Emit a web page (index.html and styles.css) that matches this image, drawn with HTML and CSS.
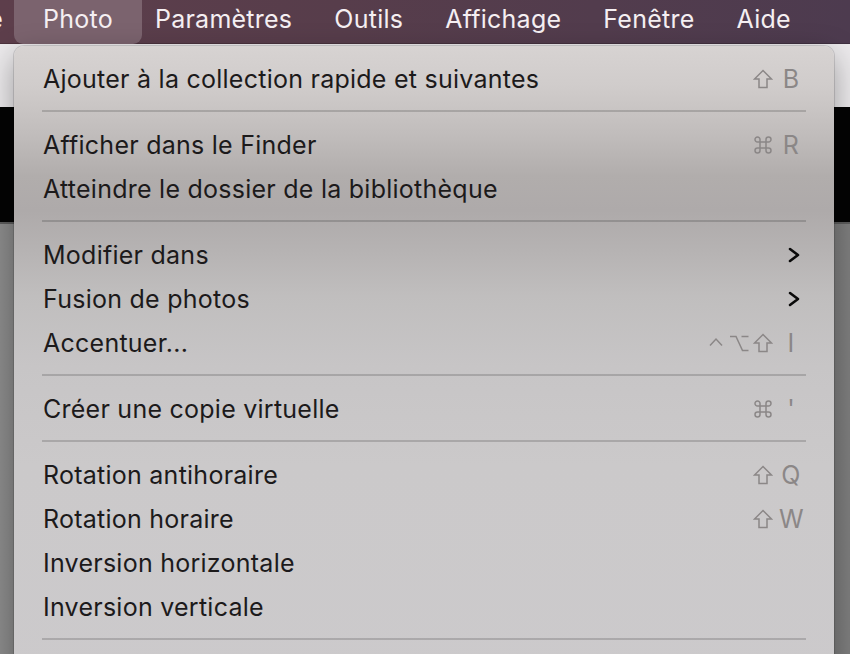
FILE: index.html
```html
<!DOCTYPE html>
<html lang="fr">
<head>
<meta charset="utf-8">
<title>Menu Photo</title>
<link rel="stylesheet" href="styles.css">
</head>
<body>
<div class="screen">
  <header class="menubar">
    <div class="prev"><span>Bibliothèque</span></div>
    <span class="mi active">Photo</span>
    <span class="mi">Paramètres</span>
    <span class="mi">Outils</span>
    <span class="mi">Affichage</span>
    <span class="mi">Fenêtre</span>
    <span class="mi">Aide</span>
  </header>
  <main class="desk">
    <div class="band light"></div>
    <div class="band dark"></div>
    <div class="band rule"></div>
    <div class="band gray"></div>
  </main>

  <nav class="menu">
    <div class="row"><span class="label">Ajouter à la collection rapide et suivantes</span>
      <span class="sc"><span class="mods"><svg class="ic shift" viewBox="0 0 20 20"><path d="M10 1.5 L18.5 10 H14 V18.5 H6 V10 H1.5 Z"/></svg></span><span class="key">B</span></span></div>
    <div class="sep"></div>
    <div class="row"><span class="label">Afficher dans le Finder</span>
      <span class="sc"><span class="mods"><svg class="ic cmd" viewBox="0 0 20 20"><path d="M7 7 V4.5 A2.5 2.5 0 1 0 4.5 7 H15.5 A2.5 2.5 0 1 0 13 4.5 V15.5 A2.5 2.5 0 1 0 15.5 13 H4.5 A2.5 2.5 0 1 0 7 15.5 Z"/></svg></span><span class="key">R</span></span></div>
    <div class="row"><span class="label">Atteindre le dossier de la bibliothèque</span></div>
    <div class="sep"></div>
    <div class="row"><span class="label">Modifier dans</span>
      <span class="sc"><span class="key sub"><svg class="chev" viewBox="0 0 12 16"><path d="M2 2 L10 8 L2 14"/></svg></span></span></div>
    <div class="row"><span class="label">Fusion de photos</span>
      <span class="sc"><span class="key sub"><svg class="chev" viewBox="0 0 12 16"><path d="M2 2 L10 8 L2 14"/></svg></span></span></div>
    <div class="row"><span class="label">Accentuer...</span>
      <span class="sc"><span class="mods">
        <svg class="ic ctrl" viewBox="0 0 14 20"><path d="M1 12.5 L7 6 L13 12.5"/></svg>
        <svg class="ic opt" viewBox="0 0 20 20"><path d="M1 3.5 H7 L13.5 17.5 H19.5 M12.5 3.5 H19.5"/></svg>
        <svg class="ic shift" viewBox="0 0 20 20"><path d="M10 1.5 L18.5 10 H14 V18.5 H6 V10 H1.5 Z"/></svg>
      </span><span class="key">I</span></span></div>
    <div class="sep"></div>
    <div class="row"><span class="label">Créer une copie virtuelle</span>
      <span class="sc"><span class="mods"><svg class="ic cmd" viewBox="0 0 20 20"><path d="M7 7 V4.5 A2.5 2.5 0 1 0 4.5 7 H15.5 A2.5 2.5 0 1 0 13 4.5 V15.5 A2.5 2.5 0 1 0 15.5 13 H4.5 A2.5 2.5 0 1 0 7 15.5 Z"/></svg></span><span class="key">'</span></span></div>
    <div class="sep"></div>
    <div class="row"><span class="label">Rotation antihoraire</span>
      <span class="sc"><span class="mods"><svg class="ic shift" viewBox="0 0 20 20"><path d="M10 1.5 L18.5 10 H14 V18.5 H6 V10 H1.5 Z"/></svg></span><span class="key">Q</span></span></div>
    <div class="row"><span class="label">Rotation horaire</span>
      <span class="sc"><span class="mods"><svg class="ic shift" viewBox="0 0 20 20"><path d="M10 1.5 L18.5 10 H14 V18.5 H6 V10 H1.5 Z"/></svg></span><span class="key">W</span></span></div>
    <div class="row"><span class="label">Inversion horizontale</span></div>
    <div class="row"><span class="label">Inversion verticale</span></div>
    <div class="sep"></div>
  </nav>
</div>
</body>
</html>
```

FILE: styles.css
```css
html, body {
  margin: 0;
  padding: 0;
  width: 850px;
  height: 654px;
  overflow: hidden;
}

body {
  font-family: Inter, "Noto Sans", "Liberation Sans", sans-serif;
  font-size: 25px;
  letter-spacing: 0.25px;
}

.screen {
  position: relative;
  width: 850px;
  height: 654px;
  overflow: hidden;
  display: flex;
  flex-direction: column;
}

/* ---------- menu bar ---------- */
.menubar {
  height: 44px;
  flex: none;
  display: flex;
  align-items: stretch;
  background: linear-gradient(90deg, #5d3e4b 0%, #573d4b 40%, #4d3b4f 100%);
  color: #f5eff2;
  white-space: nowrap;
  box-shadow: inset 0 -1px 0 rgba(0, 0, 0, 0.18);
}

.prev {
  width: 22px;
  flex: none;
  display: flex;
  justify-content: flex-end;
  align-items: center;
  overflow: hidden;
  padding-bottom: 6px;
  box-sizing: border-box;
}

.prev span {
  flex: none;
  padding-right: 19px;
}

.mi {
  display: flex;
  align-items: center;
  padding: 0 21px 6px;
  flex: none;
}

.mi.active {
  background: #7b636e;
  border-radius: 0 0 9px 9px;
  padding: 0 29px 6px;
  margin: 0 -8px;
}

/* ---------- desktop behind ---------- */
.desk {
  flex: 1;
  display: flex;
  flex-direction: column;
}

.band.light {
  height: 63px;
  background: #ebe9eb;
}

.band.dark {
  height: 115px;
  background: #040404;
}

.band.rule {
  height: 2px;
  background: #5c5c5c;
}

.band.gray {
  flex: 1;
  background: linear-gradient(90deg, #8c8c8c 0%, #858585 50%, #7e7e7e 100%);
}

/* ---------- dropdown menu ---------- */
.menu {
  position: absolute;
  left: 14px;
  top: 46px;
  width: 820px;
  height: 680px;
  box-sizing: border-box;
  padding: 11px 0;
  border-radius: 10px;
  background: linear-gradient(180deg,
    #d7d3d2 0px,
    #d0cccb 40px,
    #c0bcbb 90px,
    #b1adac 130px,
    #aeaaaa 165px,
    #b6b3b3 205px,
    #c0bebe 250px,
    #c7c5c6 320px,
    #cbc9ca 420px,
    #cccacc 680px);
  box-shadow: 0 0 0 1px rgba(0, 0, 0, 0.12), 0 10px 30px rgba(0, 0, 0, 0.35);
  color: #1c1a1b;
}

.row {
  height: 44px;
  display: flex;
  align-items: center;
  padding: 0 31px 0 29px;
  white-space: nowrap;
}

.label {
  flex: 1;
}

.sep {
  height: 2px;
  margin: 9px 28px 11px;
  background: rgba(0, 0, 0, 0.16);
}

.sc {
  display: flex;
  align-items: center;
  color: #8b8787;
}

.mods {
  display: flex;
  align-items: center;
  gap: 4px;
}

.ic {
  height: 20px;
  fill: none;
  stroke: currentColor;
  stroke-width: 1.5;
  stroke-linejoin: miter;
}

.ic.shift,
.ic.cmd,
.ic.opt {
  width: 20px;
}

.ic.ctrl {
  width: 14px;
  margin-right: 2px;
}

.key {
  width: 24px;
  margin-left: 6px;
  text-align: center;
}

.key.sub {
  display: flex;
  justify-content: flex-end;
  padding-right: 3px;
  box-sizing: border-box;
}

.chev {
  width: 12px;
  height: 16px;
  fill: none;
  stroke: #0a0a0a;
  stroke-width: 2.6;
  stroke-linecap: round;
  stroke-linejoin: round;
}
```
